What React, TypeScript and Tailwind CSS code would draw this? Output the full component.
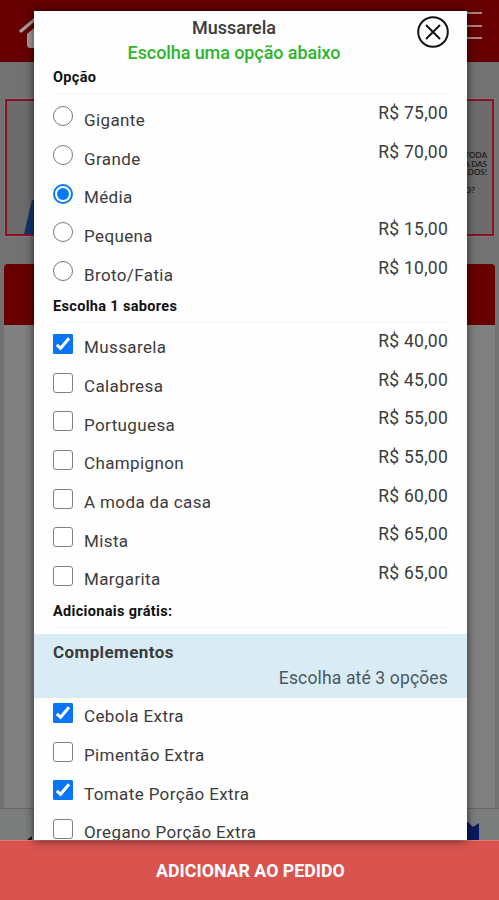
import { clsx } from "clsx";

type Option = {
  name: string;
  price?: string;
  checked?: boolean;
};

const sizes: Option[] = [
  { name: "Gigante", price: "R$ 75,00" },
  { name: "Grande", price: "R$ 70,00" },
  { name: "Média", checked: true },
  { name: "Pequena", price: "R$ 15,00" },
  { name: "Broto/Fatia", price: "R$ 10,00" },
];

const flavors: Option[] = [
  { name: "Mussarela", price: "R$ 40,00", checked: true },
  { name: "Calabresa", price: "R$ 45,00" },
  { name: "Portuguesa", price: "R$ 55,00" },
  { name: "Champignon", price: "R$ 55,00" },
  { name: "A moda da casa", price: "R$ 60,00" },
  { name: "Mista", price: "R$ 65,00" },
  { name: "Margarita", price: "R$ 65,00" },
];

const extras: Option[] = [
  { name: "Cebola Extra", checked: true },
  { name: "Pimentão Extra" },
  { name: "Tomate Porção Extra", checked: true },
  { name: "Oregano Porção Extra" },
];

function Radio({ checked }: { checked?: boolean }) {
  return (
    <span
      className={clsx(
        "flex size-5 shrink-0 items-center justify-center rounded-full bg-white",
        checked ? "border-2 border-[#0878f8]" : "border border-[#777777]"
      )}
    >
      {checked && <span className="size-3 rounded-full bg-[#0878f8]" />}
    </span>
  );
}

function Checkbox({ checked }: { checked?: boolean }) {
  return (
    <span
      className={clsx(
        "flex size-5 shrink-0 items-center justify-center border",
        checked
          ? "rounded-[1px] border-[#0875f8] bg-[#0875f8]"
          : "rounded-[3px] border-[#808080] bg-white"
      )}
    >
      {checked && (
        <svg viewBox="0 0 20 20" className="size-5 shrink-0" fill="none">
          <path d="M3.8 10.8 L7.6 14.3 L16 4.2" stroke="white" strokeWidth="3" />
        </svg>
      )}
    </span>
  );
}

function OptionRow({ option, type }: { option: Option; type: "radio" | "checkbox" }) {
  return (
    <label className="flex h-[38.7px] items-center">
      {type === "radio" ? <Radio checked={option.checked} /> : <Checkbox checked={option.checked} />}
      <span className="ml-[11px] pt-[7px] text-[17px] leading-5 tracking-[0.38px]">{option.name}</span>
      {option.price && (
        <span className="ml-auto pb-[6px] text-[17.5px] leading-5 tracking-[0.25px]">{option.price}</span>
      )}
    </label>
  );
}

function SectionTitle({ children }: { children: string }) {
  return (
    <h3 className="h-[27px] border-b border-[#f5f5f5] pt-px text-[14.5px] leading-5 font-bold tracking-[0.33px] text-[#111111]">
      {children}
    </h3>
  );
}

function Backdrop() {
  return (
    <div className="flex h-[840px] flex-col bg-[#727272]">
      <header className="flex h-[62px] shrink-0 items-start justify-between bg-[#660000] pr-[17px] pl-[19px]">
        <svg viewBox="0 0 30 34" className="mt-[15px] h-[34px] w-[30px]">
          <path d="M2 16 L15 5 L28 16" fill="none" stroke="#a79c98" strokeWidth="3.2" strokeLinecap="round" />
          <path d="M8 19 L15 13 L22 19 V33 H11 Q8 33 8 29 Z" fill="#a79c98" />
        </svg>
        <div className="mt-3 flex w-[30px] flex-col gap-[10.5px]">
          <span className="h-[2px] bg-[#a78585]" />
          <span className="h-[2px] bg-[#a78585]" />
          <span className="h-[2px] bg-[#a78585]" />
        </div>
      </header>
      <div className="mx-[5px] mt-[37px] flex h-[137px] shrink-0 items-end justify-between border-2 border-[#8d1025] bg-[#6c6c6c] outline outline-[#7c7c7c]">
        <svg viewBox="0 0 20 38" className="ml-[17px] h-[38px] w-5">
          <path d="M0 38 L8 4 L20 0 V38 Z" fill="#12346d" />
        </svg>
        <div className="mr-[5px] mb-10 text-right font-['Lato'] text-[8px] leading-[8.5px] font-bold text-[#222222]">
          <p>TODA</p>
          <p>A DAS</p>
          <p>ADOS!</p>
          <p className="mt-[9px] mr-3">O?</p>
        </div>
      </div>
      <div className="mx-1 mt-7 h-[544px] shrink-0 rounded-t bg-[#808080]">
        <div className="h-[61px] rounded-t bg-[#680000]" />
      </div>
      <div className="flex flex-1 justify-between border-t border-[#666666] bg-[#7b7e7d]">
        <svg viewBox="0 0 6 4" className="mt-auto ml-[27px] h-1 w-1.5">
          <path d="M0 4 L5 0 V4 Z" fill="#111111" />
        </svg>
        <svg viewBox="0 0 14 18" className="mt-auto mr-5 h-[18px] w-[14px]">
          <path d="M0 0 H3 L8 5 L14 1 V18 H0 Z" fill="#0b195f" />
        </svg>
      </div>
    </div>
  );
}

export default function App() {
  return (
    <div className="relative h-[900px] w-[499px] overflow-hidden font-['Roboto',sans-serif] text-[#3b3b3b]">
      <Backdrop />

      <div className="absolute top-[11px] left-[34px] h-[829px] w-[433px] overflow-hidden bg-[#fefefe] shadow-[0_0_9px_rgba(0,0,0,0.65)]">
        <div className="h-[56px] pt-[5px] text-center">
          <h1 className="pr-[33px] text-[18px] leading-6 font-medium">Mussarela</h1>
          <h2 className="pr-[33px] text-[18px] leading-[26px] font-medium tracking-[-0.09px] text-[#2db52b]">
            Escolha uma opção abaixo
          </h2>
        </div>
        <button className="absolute top-[5px] right-[18.5px]" aria-label="Fechar">
          <svg viewBox="0 0 32 32" className="size-8" fill="none" stroke="#151515" strokeWidth="2">
            <circle cx="16" cy="16" r="14.8" />
            <path d="M9 9 L23 23 M23 9 L9 23" />
          </svg>
        </button>

        <div className="px-[19px]">
          <SectionTitle>Opção</SectionTitle>
          <div className="h-[202px] pt-[3px]">
            {sizes.map((option) => (
              <OptionRow key={option.name} option={option} type="radio" />
            ))}
          </div>
          <SectionTitle>Escolha 1 sabores</SectionTitle>
          <div className="h-[278px] pt-[1.5px]">
            {flavors.map((option) => (
              <OptionRow key={option.name} option={option} type="checkbox" />
            ))}
          </div>
          <SectionTitle>Adicionais grátis:</SectionTitle>
        </div>

        <div className="mt-[6px] flex h-[63.5px] flex-col bg-[#d9ebf5] px-[19px] pt-2">
          <h3 className="text-[17px] leading-5 font-bold tracking-[0.4px]">Complementos</h3>
          <p className="mt-[6px] text-right text-[17.5px] leading-5 tracking-[0.15px] text-[#4b5860]">
            Escolha até 3 opções
          </p>
        </div>
        <div className="-mt-[4px] px-[19px]">
          {extras.map((option) => (
            <OptionRow key={option.name} option={option} type="checkbox" />
          ))}
        </div>
      </div>

      <button className="flex h-[60px] w-full items-center justify-center border-t border-[#e47773] bg-[#d9534f] pt-px pl-[2px] text-[17.8px] font-bold text-white">
        ADICIONAR AO PEDIDO
      </button>
    </div>
  );
}
